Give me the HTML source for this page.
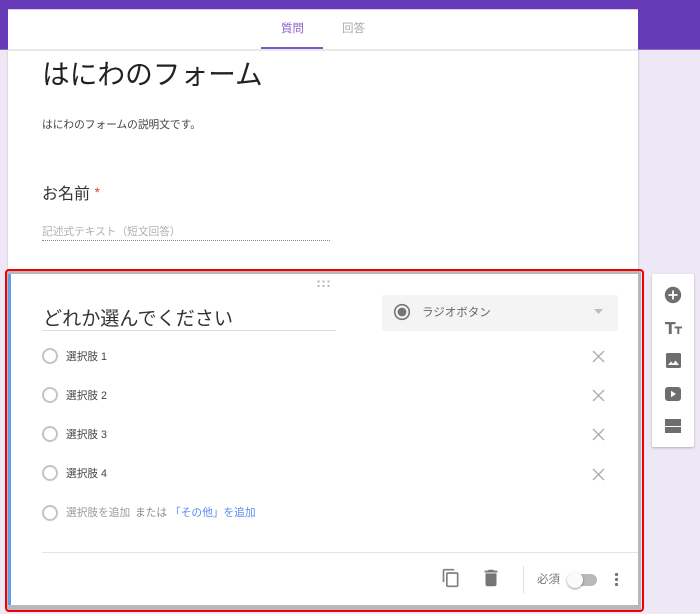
<!DOCTYPE html>
<html><head><meta charset="utf-8">
<style>
html,body{margin:0;padding:0}
body{width:700px;height:614px;position:relative;overflow:hidden;background:#ede7f6;font-family:"Liberation Sans","Noto Sans CJK JP",sans-serif}
.a{position:absolute;white-space:nowrap}
.t{line-height:1;color:#444}
.rad{position:absolute;left:42px;width:12px;height:12px;border:2px solid #c4c4c4;border-radius:50%;background:#fff}
.opt{position:absolute;left:66px;font-size:10.7px;line-height:14px;color:#444;white-space:nowrap}
svg{position:absolute;display:block}
</style></head><body>
<div class="a" style="left:0;top:0;width:700px;height:49px;background:#673ab7"></div>
<div class="a" style="left:0;top:49px;width:700px;height:1px;background:#8e6bcb"></div>
<div class="a" style="left:8px;top:50px;width:630px;height:220px;background:#fff;box-shadow:1px 0 1px #d2ced9,-1px 0 1px #dedae4"></div>
<div class="a" style="left:8px;top:9px;width:630px;height:40px;background:#fff;border-top:1px solid #d9c9f3;box-sizing:border-box"></div>
<div class="a" style="left:8px;top:49px;width:630px;height:2px;background:#e8e8e8"></div>
<div class="a t" style="left:281px;top:24px;font-size:11.5px;color:#8a63c9">質問</div>
<div class="a" style="left:261px;top:47px;width:62px;height:2px;background:#7e57c2"></div>
<div class="a t" style="left:342px;top:24px;font-size:11.5px;color:#aaa">回答</div>

<div class="a t" style="left:42px;top:61px;font-size:27.7px;color:#222">はにわのフォーム</div>
<div class="a t" style="left:42px;top:120px;font-size:10.7px;color:#444">はにわのフォームの説明文です。</div>
<div class="a t" style="left:42px;top:187px;font-size:16px;color:#333">お名前 <span style="color:#e53935;font-size:14px;position:relative;top:-2px">*</span></div>
<div class="a t" style="left:42px;top:227px;font-size:10.7px;color:#b0b0b0">記述式テキスト（短文回答）</div>
<div class="a" style="left:42px;top:240px;width:288px;border-top:1px dotted #888"></div>

<!-- active card -->
<div class="a" style="left:7px;top:271px;width:634px;height:339px;background:#b8b8bc"></div>
<div class="a" style="left:10px;top:274px;width:628px;height:331px;background:#fff"></div>
<div class="a" style="left:8px;top:274px;width:2.500px;height:331px;background:#5f9cf0"></div>
<div class="a" style="left:5px;top:269px;width:639px;height:343px;box-sizing:border-box;border:2px solid #f00000;border-radius:4px"></div>
<svg style="left:317px;top:280px" width="14" height="8" viewBox="0 0 14 8" fill="#b5b5b5"><rect x="0.5" y="0.5" width="2" height="2"/><rect x="5.5" y="0.5" width="2" height="2"/><rect x="10.5" y="0.5" width="2" height="2"/><rect x="0.5" y="5" width="2" height="2"/><rect x="5.5" y="5" width="2" height="2"/><rect x="10.5" y="5" width="2" height="2"/></svg>

<div class="a t" style="left:43px;top:310px;font-size:19.1px;color:#333">どれか選んでください</div>
<div class="a" style="left:42px;top:330px;width:294px;height:1px;background:#dedede"></div>

<div class="a" style="left:382px;top:295px;width:236px;height:36px;background:#f4f4f4;border-radius:2px"></div>
<svg style="left:393px;top:303px" width="18" height="18" viewBox="0 0 18 18"><circle cx="9" cy="9" r="7.3" fill="none" stroke="#757575" stroke-width="1.6"/><circle cx="9" cy="9" r="4.4" fill="#757575"/></svg>
<div class="a t" style="left:422px;top:308px;font-size:11.5px;color:#666">ラジオボタン</div>
<svg style="left:594px;top:309px" width="9" height="5" viewBox="0 0 9 5"><path d="M0 0H9L4.500 5Z" fill="#bdbdbd"/></svg>

<div class="rad" style="top:348px"></div><div class="opt" style="top:350px">選択肢 1</div>
<div class="rad" style="top:387px"></div><div class="opt" style="top:389px">選択肢 2</div>
<div class="rad" style="top:426px"></div><div class="opt" style="top:428px">選択肢 3</div>
<div class="rad" style="top:465px"></div><div class="opt" style="top:467px">選択肢 4</div>
<div class="rad" style="top:505px"></div>
<div class="opt" style="top:506px;color:#9a9a9a">選択肢を追加</div>
<div class="opt" style="left:135px;top:506px;color:#8a8a8a">または</div>
<div class="opt" style="left:170px;top:506px;color:#5b8df0">「その他」を追加</div>

<svg style="left:592px;top:350px" width="13" height="13" viewBox="0 0 13 13"><path d="M1 1L12 12M12 1L1 12" stroke="#b0b0b0" stroke-width="1.5"/></svg>
<svg style="left:592px;top:389px" width="13" height="13" viewBox="0 0 13 13"><path d="M1 1L12 12M12 1L1 12" stroke="#b0b0b0" stroke-width="1.5"/></svg>
<svg style="left:592px;top:428px" width="13" height="13" viewBox="0 0 13 13"><path d="M1 1L12 12M12 1L1 12" stroke="#b0b0b0" stroke-width="1.5"/></svg>
<svg style="left:592px;top:468px" width="13" height="13" viewBox="0 0 13 13"><path d="M1 1L12 12M12 1L1 12" stroke="#b0b0b0" stroke-width="1.5"/></svg>

<div class="a" style="left:42px;top:552px;width:596px;height:1px;background:#e4e4e4"></div>
<svg style="left:441px;top:568px" width="20" height="20" viewBox="0 0 24 24" fill="#808080"><path d="M16 1H4c-1.100 0-2 .9-2 2v14h2V3h12V1zm3 4H8c-1.100 0-2 .9-2 2v14c0 1.100.9 2 2 2h11c1.100 0 2-.9 2-2V7c0-1.100-.9-2-2-2zm0 16H8V7h11v14z"/></svg>
<svg style="left:479.500px;top:567px" width="22" height="22" viewBox="0 0 24 24" fill="#757575"><path d="M6 19c0 1.100.9 2 2 2h8c1.100 0 2-.9 2-2V7H6v12zM19 4h-3.500l-1-1h-5l-1 1H5v2h14V4z"/></svg>
<div class="a" style="left:523px;top:566px;width:1px;height:27px;background:#e0e0e0"></div>
<div class="a t" style="left:537px;top:575px;font-size:11.5px;color:#777">必須</div>
<div class="a" style="left:569px;top:574px;width:28px;height:12px;border-radius:6px;background:#b9b9b9"></div>
<div class="a" style="left:567px;top:572px;width:16px;height:16px;border-radius:50%;background:#fafafa;box-shadow:0 1px 2px rgba(0,0,0,.4)"></div>
<svg style="left:613px;top:571px" width="7" height="17" viewBox="0 0 7 17" fill="#757575"><circle cx="3.500" cy="3.500" r="1.600"/><circle cx="3.500" cy="8.500" r="1.600"/><circle cx="3.500" cy="13.500" r="1.600"/></svg>

<!-- side toolbar -->
<div class="a" style="left:652px;top:274px;width:42px;height:173px;background:#fff;border-radius:2px;box-shadow:0 1px 2px rgba(0,0,0,.25)"></div>
<svg style="left:664px;top:286px" width="18" height="18" viewBox="0 0 18 18"><circle cx="9" cy="9" r="8.200" fill="#6e6e6e"/><path d="M9 4.500v9M4.500 9h9" stroke="#fff" stroke-width="1.800"/></svg>
<svg style="left:665px;top:322px" width="17" height="12" viewBox="0 0 17 12" fill="#6e6e6e"><path d="M0 0h10.500v2.200H6.700V12H3.800V2.200H0z"/><path d="M9.500 4.500H17v1.900h-2.700V12h-2V6.400H9.500z"/></svg>
<svg style="left:666px;top:353px" width="15" height="15" viewBox="0 0 15 15"><rect width="15" height="15" rx="1.500" fill="#6e6e6e"/><path d="M2 12l3-3.500 2 2.200 2.500-3.200 3.500 4.500z" fill="#fff"/></svg>
<svg style="left:665px;top:387px" width="16" height="14" viewBox="0 0 16 14"><rect width="16" height="14" rx="3" fill="#6e6e6e"/><path d="M6 3.800l5 3.200-5 3.200z" fill="#fff"/></svg>
<svg style="left:665px;top:419px" width="16" height="14" viewBox="0 0 16 14" fill="#6e6e6e"><rect width="16" height="7"/><rect width="16" height="6" y="8"/></svg>
</body></html>
